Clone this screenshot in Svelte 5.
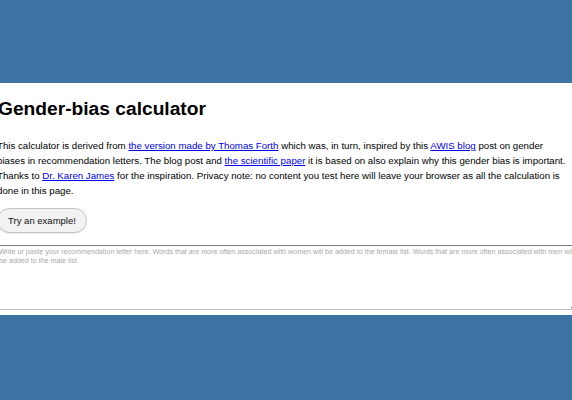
<script>
  let letter = $state('');
</script>

<div class="page">
  <main class="panel">
    <h1>Gender-bias calculator</h1>
    <p>
      This calculator is derived from <a href="#forth">the version made by Thomas Forth</a> which was, in turn, inspired by this <a href="#awis">AWIS blog</a> post on gender biases in recommendation letters. The blog post and <a href="#paper">the scientific paper</a> it is based on also explain why this gender bias is important. Thanks to <a href="#karen">Dr. Karen James</a> for the inspiration. Privacy note: no content you test here will leave your browser as all the calculation is done in this page.
    </p>
    <button type="button" class="example">Try an example!</button>
    <textarea
      bind:value={letter}
      placeholder="Write or paste your recommendation letter here. Words that are more often associated with women will be added to the female list. Words that are more often associated with men will be added to the male list."
    ></textarea>
  </main>
</div>

<style>
  :global(body) {
    margin: 0;
    background: #3d73a3;
    overflow: hidden;
  }

  .page {
    height: 400px;
    padding-top: 83px;
    box-sizing: border-box;
    overflow: hidden;
  }

  .panel {
    height: 232px;
    box-sizing: border-box;
    background: #fff;
    padding: 14px 0 0 0;
    margin: 0 0 0 -3px;
    font-family: "Liberation Sans", Arial, sans-serif;
    color: #000;
  }

  h1 {
    margin: 0 0 17px 0;
    padding-left: 1px;
    font-size: 19.2px;
    line-height: 24px;
    font-weight: 700;
  }

  p {
    margin: 0 0 10px 0;
    font-size: 9.7px;
    line-height: 15px;
  }

  a {
    color: #0000ee;
    text-decoration: underline;
  }

  .example {
    display: block;
    width: 90px;
    height: 25px;
    padding: 0;
    border: 1px solid #c4c4c4;
    border-radius: 13px;
    background: #f2f2f2;
    font-family: inherit;
    font-size: 9.5px;
    color: #111;
    box-shadow: 0 1px 1px rgba(0, 0, 0, 0.08);
  }

  textarea {
    display: block;
    width: calc(100% + 8px);
    height: 65px;
    margin-top: 12px;
    padding: 2px 2px 2px 1px;
    box-sizing: border-box;
    border: 1px solid #bbb;
    border-top-color: #767676;
    border-radius: 0;
    font-family: inherit;
    font-size: 7.15px;
    line-height: 8.5px;
    background: #fff;
    outline: none;
  }

  textarea::placeholder {
    color: #a9a9a9;
    opacity: 1;
  }
</style>
